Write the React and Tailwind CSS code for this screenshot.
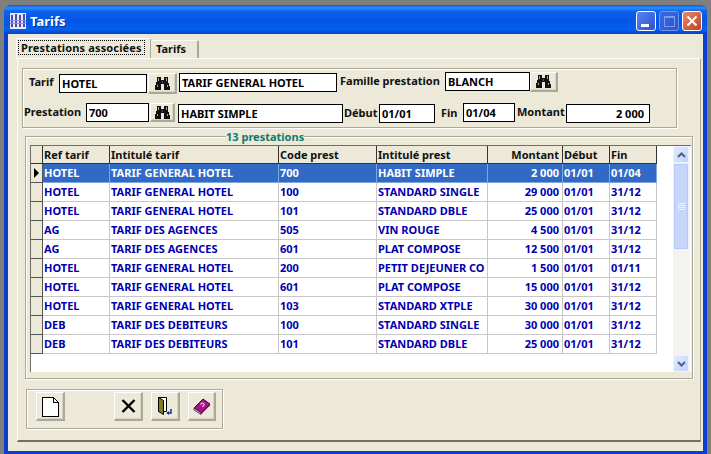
const font = { fontFamily: '"Noto Sans", Tahoma, sans-serif' };

function Binoculars() {
  return (
    <svg width="17" height="15" viewBox="0 0 17 15" shapeRendering="crispEdges">
      <path d="M3 1h4v3h3V1h4v4l2 6v3h-6V8H7v6H1v-3l2-6z" fill="#111" />
      <path d="M4 2h1v3H4zM12 2h1v3h-1zM3 9h1v2H3zM13 9h1v2h-1z" fill="#a8a494" />
      <path d="M8 5h1v2H8z" fill="#555" />
    </svg>
  );
}

function RaisedButton({ className, children }) {
  return (
    <div className={`flex items-center justify-center bg-[#ece9d8] border-t border-l border-t-white border-l-white border-r-2 border-b-2 border-r-[#aca899] border-b-[#aca899] shadow-[inset_-1px_-1px_0_#d8d4c4] ${className}`}>
      {children}
    </div>
  );
}

function Field({ className, right, children }) {
  return (
    <div className={`flex items-center h-[19px] bg-white border border-black px-[2px] text-[11px] font-bold leading-none text-black whitespace-nowrap overflow-hidden ${right ? 'justify-end pr-[5px]' : ''} ${className}`}>
      {children}
    </div>
  );
}

function Label({ className, children }) {
  return <span className={`text-[11px] font-bold leading-[14px] text-[#111] whitespace-nowrap ${className}`}>{children}</span>;
}

const columns = [
  ['Ref tarif', 'w-[67px]', ''],
  ['Intitulé tarif', 'w-[169px]', ''],
  ['Code prest', 'w-[98px]', ''],
  ['Intitulé prest', 'w-[111px]', ''],
  ['Montant', 'w-[75px]', 'justify-end pr-[3px]'],
  ['Début', 'w-[47px]', ''],
  ['Fin', 'w-[47px]', ''],
];

const rows = [
  ['HOTEL', 'TARIF GENERAL HOTEL', '700', 'HABIT SIMPLE', '2 000', '01/01', '01/04'],
  ['HOTEL', 'TARIF GENERAL HOTEL', '100', 'STANDARD SINGLE', '29 000', '01/01', '31/12'],
  ['HOTEL', 'TARIF GENERAL HOTEL', '101', 'STANDARD DBLE', '25 000', '01/01', '31/12'],
  ['AG', 'TARIF DES AGENCES', '505', 'VIN ROUGE', '4 500', '01/01', '31/12'],
  ['AG', 'TARIF DES AGENCES', '601', 'PLAT COMPOSE', '12 500', '01/01', '31/12'],
  ['HOTEL', 'TARIF GENERAL HOTEL', '200', 'PETIT DEJEUNER CO', '1 500', '01/01', '01/11'],
  ['HOTEL', 'TARIF GENERAL HOTEL', '601', 'PLAT COMPOSE', '15 000', '01/01', '31/12'],
  ['HOTEL', 'TARIF GENERAL HOTEL', '103', 'STANDARD XTPLE', '30 000', '01/01', '31/12'],
  ['DEB', 'TARIF DES DEBITEURS', '100', 'STANDARD SINGLE', '30 000', '01/01', '31/12'],
  ['DEB', 'TARIF DES DEBITEURS', '101', 'STANDARD DBLE', '25 000', '01/01', '31/12'],
];

function ScrollArrow({ up }) {
  return (
    <div className="flex items-center justify-center h-[17px] w-[16px] rounded-[2px] border border-[#eef2fd] bg-[linear-gradient(135deg,#e1eafe,#c3d3fd)]">
      <svg width="9" height="6" viewBox="0 0 9 6">
        <path d={up ? 'M1 5l3.5-3.5L8 5' : 'M1 1l3.5 3.5L8 1'} fill="none" stroke="#4d6185" strokeWidth="2" />
      </svg>
    </div>
  );
}

export default function App() {
  return (
    <div style={font} className="w-[711px] h-[454px] bg-[#7f7f7f] pt-[5px] pl-[4px] pr-[4px] overflow-hidden">
      <div className="h-[449px] rounded-t-[7px] bg-[#0a3fd0] flex flex-col">
        <div className="h-[29px] shrink-0 rounded-t-[7px] flex items-center pt-[3px] pl-[6px] pr-[5px] bg-[linear-gradient(180deg,#0a5ae4_0%,#2f8cf5_10%,#0a62ee_22%,#0456e4_55%,#0460ee_85%,#0340c8_100%)]">
          <svg width="16" height="16" viewBox="0 0 16 16" className="shrink-0" shapeRendering="crispEdges">
            <rect width="16" height="16" fill="#e8e8f4" />
            <path d="M1 2h2v12H1zM5 1h2v13H5zM9 2h2v12H9zM13 1h2v13h-2z" fill="#4a4ab0" />
            <path d="M0 7h16v1H0zM0 10h16v1H0z" fill="#8f8fd8" />
          </svg>
          <span className="ml-[4px] text-white font-bold text-[13px] leading-none [text-shadow:1px_1px_0_#0a2f9c]">Tarifs</span>
          <div className="ml-auto flex gap-[3px]">
            <div className="w-[20px] h-[20px] rounded-[3px] border border-white bg-[linear-gradient(135deg,#5a86ee,#2a50d0)] flex items-end pl-[4px] pb-[3px]">
              <div className="w-[8px] h-[3px] bg-white" />
            </div>
            <div className="w-[20px] h-[20px] rounded-[3px] border border-[#6f93ea] bg-[linear-gradient(135deg,#3a69e4,#2a54cf)] flex items-center justify-center">
              <div className="w-[11px] h-[11px] border border-[#7a9cec] border-t-2" />
            </div>
            <div className="w-[20px] h-[20px] rounded-[3px] border border-white bg-[linear-gradient(135deg,#e88a70,#c3401c)] flex items-center justify-center">
              <svg width="12" height="12" viewBox="0 0 12 12"><path d="M1.5 1.5l9 9M10.5 1.5l-9 9" stroke="#fff" strokeWidth="2" /></svg>
            </div>
          </div>
        </div>

        <div className="mx-[4px] mb-[3px] flex-1 bg-[#ece9d8] pt-[4px] pl-[9px] pr-[1px] flex flex-col min-h-0">
          <div className="flex items-end h-[20px] relative z-10 -ml-[1px]">
            <div className="h-[20px] w-[135px] bg-[#ece9d8] border border-b-0 border-white border-r-[#aca899] rounded-t-[2px] flex items-start pt-[1px] pl-[1px]">
              <span className="text-[11px] font-bold leading-[13px] tracking-[0.15px] text-[#111] border border-dotted border-black px-[2px]">Prestations associées</span>
            </div>
            <div className="h-[18px] w-[48px] bg-[#ece9d8] border-t border-white border-r-2 border-r-[#aca899] rounded-t-[2px] flex items-center pl-[5px]">
              <span className="text-[11px] font-bold text-[#111]">Tarifs</span>
            </div>
          </div>

          <div className="h-[384px] w-[684px] border border-white border-r-[#aca899] border-b-2 border-b-[#716f64] pt-[9px] pl-[4px]">
            <div className="h-[60px] w-[655px] border border-[#aca899] shadow-[inset_1px_1px_0_#fff,1px_1px_0_#fff] flex flex-col pt-[4px]">
              <div className="flex items-start h-[30px]">
                <Label className="ml-[6px] mt-[2px] w-[30px]">Tarif</Label>
                <Field className="w-[88px] mt-[1px]">HOTEL</Field>
                <RaisedButton className="ml-[1px] w-[29px] h-[21px]"><Binoculars /></RaisedButton>
                <Field className="ml-[2px] w-[158px]">TARIF GENERAL HOTEL</Field>
                <Label className="ml-[3px] mt-[1px] w-[105px]">Famille prestation</Label>
                <Field className="w-[85px] -mt-[1px]">BLANCH</Field>
                <RaisedButton className="w-[28px] h-[20px] -mt-[1px]"><Binoculars /></RaisedButton>
              </div>
              <div className="flex items-start h-[22px]">
                <Label className="ml-[1px] mt-[2px] w-[62px]">Prestation</Label>
                <Field className="w-[63px]">700</Field>
                <RaisedButton className="ml-[1px] w-[25px] h-[19px]"><Binoculars /></RaisedButton>
                <Field className="ml-[3px] w-[165px] mt-[1px]">HABIT SIMPLE</Field>
                <Label className="ml-[1px] mt-[3px] w-[35px]">Début</Label>
                <Field className="w-[56px] mt-[1px]">01/01</Field>
                <Label className="ml-[6px] mt-[3px] w-[22px]">Fin</Label>
                <Field className="w-[52px]">01/04</Field>
                <Label className="ml-[2px] mt-[2px] w-[49px]">Montant</Label>
                <Field right className="w-[84px] mt-[1px]">2 000</Field>
              </div>
            </div>

            <div className="relative mt-[8px] ml-[3px] h-[243px] w-[668px] border border-[#aca899] shadow-[inset_1px_1px_0_#fff,1px_1px_0_#fff] pt-[8px] pl-[4px]">
              <span className="absolute left-[200px] -top-[7px] bg-[#ece9d8] text-[11px] font-bold leading-[13px] text-[#0b7a6f] whitespace-nowrap">13 prestations</span>
              <div className="h-[227px] w-[661px] bg-white border-t border-l border-[#716f64] flex">
                <div className="w-[626px] flex flex-col">
                  <div className="flex h-[18px] shrink-0">
                    <div className="w-[12px] bg-[#ece9d8] border-r border-b border-[#333]" />
                    {columns.map(([name, w, extra]) => (
                      <div key={name} className={`${w} ${extra} flex items-center pl-[1px] bg-[#ece9d8] border-r border-b border-[#333] text-[11px] font-bold leading-none text-[#111] whitespace-nowrap`}>{name}</div>
                    ))}
                  </div>
                  {rows.map((row, i) => (
                    <div key={i} className="flex h-[19px] shrink-0">
                      <div className="w-[12px] bg-[#ece9d8] border-r border-b border-[#555] flex items-center pl-[3px]">
                        {i === 0 && <div className="w-0 h-0 border-y-[5px] border-y-transparent border-l-[5px] border-l-black" />}
                      </div>
                      {row.map((cell, j) => (
                        <div key={j} className={`${columns[j][1]} ${columns[j][2]} flex items-center pl-[1px] pb-[1px] overflow-hidden border-r border-b text-[11px] font-bold leading-none whitespace-nowrap ${i === 0 ? 'bg-[#316ac5] text-white border-[#7fa6de]' : 'bg-white text-[#0000b0] border-[#c8c8c8]'}`}>{cell}</div>
                      ))}
                    </div>
                  ))}
                </div>
                <div className="ml-[16px] w-[17px] mr-[1px] flex flex-col bg-[#f4f3ee]">
                  <ScrollArrow up />
                  <div className="w-[16px] h-[87px] rounded-[2px] border border-[#eef2fd] shadow-[inset_0_0_0_1px_#b5c8f8] bg-[#c8d6fb] flex flex-col items-center justify-center gap-[1px]">
                    <div className="w-[7px] h-px bg-[#eef2fd]" />
                    <div className="w-[7px] h-px bg-[#eef2fd]" />
                    <div className="w-[7px] h-px bg-[#eef2fd]" />
                    <div className="w-[7px] h-px bg-[#eef2fd]" />
                  </div>
                  <div className="flex-1" />
                  <ScrollArrow />
                </div>
              </div>
            </div>

            <div className="mt-[10px] ml-[4px] h-[40px] w-[197px] border border-[#aca899] shadow-[inset_1px_1px_0_#fff,1px_1px_0_#fff] flex items-start pt-[2px] pl-[9px]">
              <RaisedButton className="w-[29px] h-[29px]">
                <svg width="18" height="21" viewBox="0 0 18 21" shapeRendering="crispEdges">
                  <path d="M1 1h11l5 5v14H1z" fill="#fff" stroke="#000" />
                  <path d="M12 1v5h5" fill="none" stroke="#000" />
                </svg>
              </RaisedButton>
              <RaisedButton className="ml-[49px] w-[29px] h-[29px]">
                <svg width="15" height="14" viewBox="0 0 15 14"><path d="M1.5 1l12 12M13.5 1l-12 12" stroke="#000" strokeWidth="2.4" /></svg>
              </RaisedButton>
              <RaisedButton className="ml-[8px] w-[29px] h-[29px]">
                <svg width="17" height="19" viewBox="0 0 17 19">
                  <path d="M1.500.5h8v14h-8z" fill="#fff" stroke="#000" />
                  <path d="M1.500.5l5 3v14l-5-3z" fill="#7f7f1f" stroke="#000" />
                  <path d="M14 12v4h-4" fill="none" stroke="#1a2a9a" strokeWidth="1.500" />
                  <path d="M12 14l-2.500 2 2.500 2z" fill="#1a2a9a" />
                </svg>
              </RaisedButton>
              <RaisedButton className="ml-[8px] w-[28px] h-[29px]">
                <svg width="18" height="17" viewBox="0 0 18 17">
                  <path d="M1 10L10 1l7 5-9 9z" fill="#a0158a" stroke="#3a0a3a" />
                  <path d="M1 10l7 5v1.500L1 12z" fill="#d8c8d8" stroke="#3a0a3a" strokeWidth=".7" />
                  <path d="M8 15l9-9v1.500L8 16.500z" fill="#7a0f6a" />
                  <path d="M7.500 6.500c1-2 4-1.500 3.500.3-.3 1-1.500 1-1.500 2.200" fill="none" stroke="#f4c0d0" strokeWidth="1.200" />
                </svg>
              </RaisedButton>
            </div>
          </div>
        </div>
      </div>
    </div>
  );
}
